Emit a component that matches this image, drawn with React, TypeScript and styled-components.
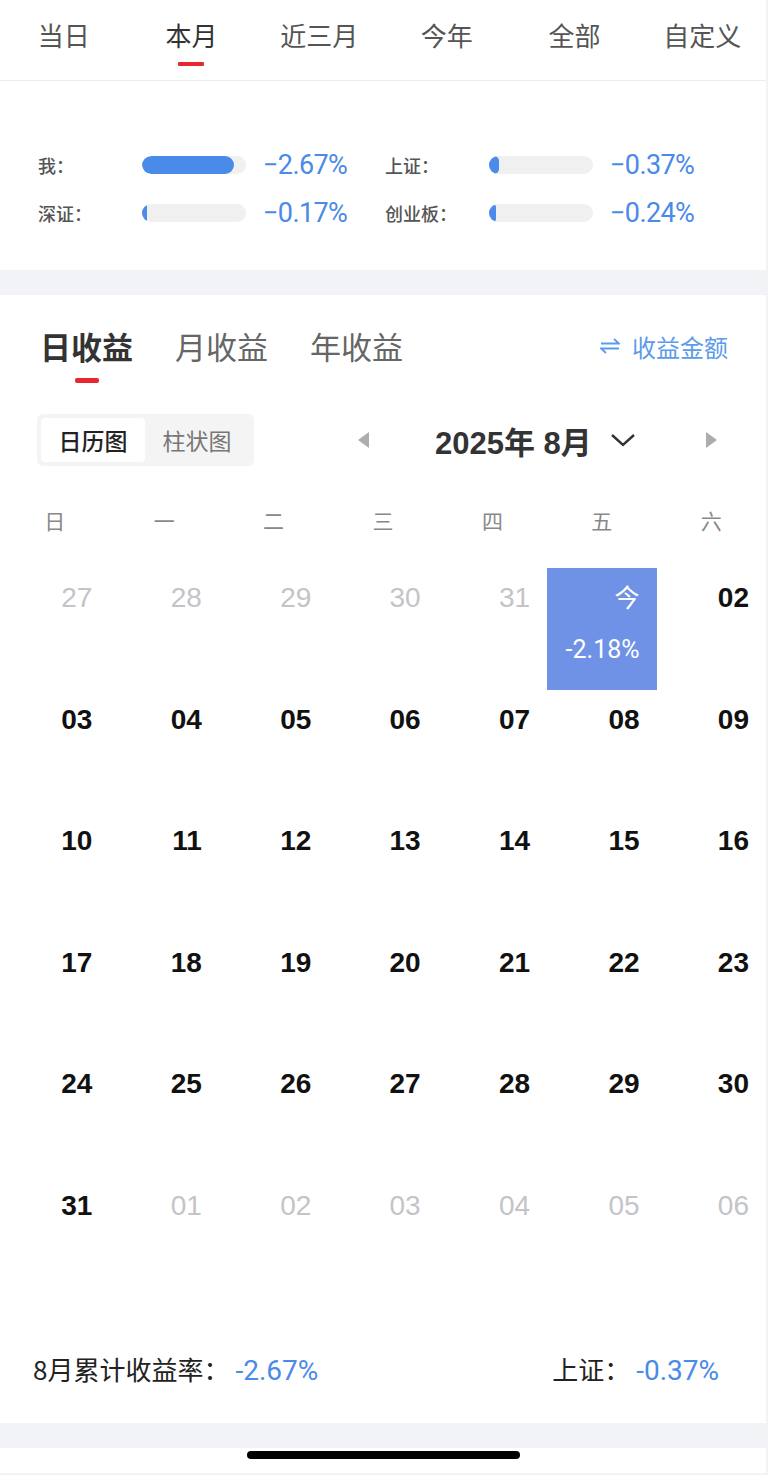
import React, { useState } from 'react';
import styled, { createGlobalStyle } from 'styled-components';

const GlobalStyle = createGlobalStyle`
  body {
    margin: 0;
    background: #ffffff;
    font-family: "Noto Sans CJK SC", "Noto Sans", sans-serif;
  }
`;

const BLUE = '#4a8ae8';

const periods = ['当日', '本月', '近三月', '今年', '全部', '自定义'];

const stats = [
  { label: '我：', fill: 92, value: '−2.67%' },
  { label: '上证：', fill: 10, value: '−0.37%' },
  { label: '深证：', fill: 5, value: '−0.17%' },
  { label: '创业板：', fill: 7, value: '−0.24%' },
];

const weekdays = ['日', '一', '二', '三', '四', '五', '六'];

type Day = { n: string; muted?: boolean; today?: boolean; rate?: string };

const buildDays = (): Day[] => {
  const days: Day[] = [];
  ['27', '28', '29', '30', '31'].forEach((n) => days.push({ n, muted: true }));
  days.push({ n: '今', today: true, rate: '-2.18%' });
  for (let i = 2; i <= 31; i++) days.push({ n: String(i).padStart(2, '0') });
  ['01', '02', '03', '04', '05', '06'].forEach((n) => days.push({ n, muted: true }));
  return days;
};

export default function App() {
  const [period, setPeriod] = useState(1);
  const [kind, setKind] = useState(0);
  const [view, setView] = useState(0);
  const days = buildDays();

  return (
    <Page>
      <GlobalStyle />
      <PeriodBar>
        {periods.map((p, i) => (
          <PeriodTab key={p} active={i === period} onClick={() => setPeriod(i)}>
            {p}
          </PeriodTab>
        ))}
      </PeriodBar>

      <StatsPanel>
        {stats.map((s) => (
          <StatItem key={s.label}>
            <StatLabel>{s.label}</StatLabel>
            <Track>
              <Fill style={{ width: `${s.fill}px` }} />
            </Track>
            <StatValue>{s.value}</StatValue>
          </StatItem>
        ))}
      </StatsPanel>

      <Gap />

      <ProfitHeader>
        <KindTabs>
          {['日收益', '月收益', '年收益'].map((k, i) => (
            <KindTab key={k} active={i === kind} onClick={() => setKind(i)}>
              {k}
            </KindTab>
          ))}
        </KindTabs>
        <SwitchLink>
          <svg width="20" height="16" viewBox="0 0 20 16">
            <path
              d="M1 5.5 H19 L14 1 M19 10.5 H1 L6 15"
              fill="none"
              stroke="#5b9bec"
              strokeWidth="1.8"
            />
          </svg>
          收益金额
        </SwitchLink>
      </ProfitHeader>

      <ToolRow>
        <Segment>
          {['日历图', '柱状图'].map((v, i) => (
            <SegmentItem key={v} active={i === view} onClick={() => setView(i)}>
              {v}
            </SegmentItem>
          ))}
        </Segment>
        <MonthNav>
          <Arrow viewBox="0 0 11 16">
            <path d="M11 0 L11 16 L0 8 Z" fill="#acacac" />
          </Arrow>
          <MonthTitle>
            2025年 8月
            <svg width="26" height="16" viewBox="0 0 26 16">
              <path d="M2 3 L13 13 L24 3" fill="none" stroke="#333" strokeWidth="2.4" />
            </svg>
          </MonthTitle>
          <Arrow viewBox="0 0 11 16">
            <path d="M0 0 L0 16 L11 8 Z" fill="#acacac" />
          </Arrow>
        </MonthNav>
      </ToolRow>

      <WeekRow>
        {weekdays.map((w) => (
          <WeekCell key={w}>{w}</WeekCell>
        ))}
      </WeekRow>

      <DayGrid>
        {days.map((d, i) => (
          <DayCell key={i} today={d.today}>
            <DayNum muted={d.muted} today={d.today}>{d.n}</DayNum>
            {d.rate && <DayRate>{d.rate}</DayRate>}
          </DayCell>
        ))}
      </DayGrid>

      <Summary>
        <SummaryPart>
          8月累计收益率：<SummaryValue>-2.67%</SummaryValue>
        </SummaryPart>
        <SummaryPart>
          上证：<SummaryValue>-0.37%</SummaryValue>
        </SummaryPart>
      </Summary>

      <Gap />

      <HomeArea>
        <HomeBar />
      </HomeArea>
    </Page>
  );
}

const Page = styled.div`
  width: 768px;
  height: 1475px;
  overflow: hidden;
  background: #fff;
  box-sizing: border-box;
  border-right: 2px solid #f3f3f3;
`;

const PeriodBar = styled.div`
  display: grid;
  grid-template-columns: repeat(6, 1fr);
  height: 81px;
  border-bottom: 1px solid #ececec;
  box-sizing: border-box;
`;

const PeriodTab = styled.div<{ active: boolean }>`
  position: relative;
  text-align: center;
  padding-top: 16px;
  font-size: 26px;
  line-height: 38px;
  color: ${({ active }) => (active ? '#333' : '#555')};

  &::after {
    content: '';
    display: ${({ active }) => (active ? 'block' : 'none')};
    position: absolute;
    left: 50%;
    top: 62px;
    width: 26px;
    height: 4px;
    margin-left: -13px;
    background: #e8262d;
    border-radius: 1px;
  }
`;

const StatsPanel = styled.div`
  display: grid;
  grid-template-columns: 347px 347px;
  grid-auto-rows: 48px;
  padding: 60px 0 33px 38px;
  height: 189px;
  box-sizing: border-box;
`;

const StatItem = styled.div`
  display: flex;
  align-items: center;
`;

const StatLabel = styled.div`
  width: 104px;
  font-size: 18px;
  font-weight: 500;
  color: #555;
`;

const Track = styled.div`
  width: 104px;
  height: 18px;
  border-radius: 9px;
  background: #f0f0f0;
  overflow: hidden;
`;

const Fill = styled.div`
  height: 100%;
  border-radius: 9px;
  background: ${BLUE};
  min-width: 5px;
`;

const StatValue = styled.div`
  margin-left: 17px;
  font-family: "Roboto", "Noto Sans", sans-serif;
  font-size: 27px;
  color: ${BLUE};
  letter-spacing: -0.6px;
`;

const Gap = styled.div`
  height: 25px;
  background: #f2f3f6;
`;

const ProfitHeader = styled.div`
  display: flex;
  align-items: center;
  justify-content: space-between;
  padding: 12px 38px 0 40px;
  height: 90px;
  box-sizing: border-box;
`;

const KindTabs = styled.div`
  display: flex;
  gap: 42px;
`;

const KindTab = styled.div<{ active: boolean }>`
  position: relative;
  font-size: 31px;
  line-height: 50px;
  font-weight: ${({ active }) => (active ? 700 : 400)};
  color: ${({ active }) => (active ? '#333' : '#666')};

  &::after {
    content: '';
    display: ${({ active }) => (active ? 'block' : 'none')};
    position: absolute;
    left: 50%;
    top: 57px;
    width: 24px;
    height: 5px;
    margin-left: -12px;
    border-radius: 2px;
    background: #e8262d;
  }
`;

const SwitchLink = styled.div`
  display: flex;
  align-items: center;
  gap: 12px;
  font-size: 24px;
  color: #5b9bec;
`;

const ToolRow = styled.div`
  display: flex;
  align-items: center;
  padding: 29px 0 0 37px;
  height: 81px;
  box-sizing: border-box;
`;

const Segment = styled.div`
  display: flex;
  width: 217px;
  height: 52px;
  padding: 4px;
  box-sizing: border-box;
  border-radius: 6px;
  background: #f4f4f4;
`;

const SegmentItem = styled.div<{ active: boolean }>`
  flex: 0 0 104px;
  display: flex;
  align-items: center;
  justify-content: center;
  border-radius: 4px;
  font-size: 23px;
  background: ${({ active }) => (active ? '#fff' : 'transparent')};
  color: ${({ active }) => (active ? '#222' : '#777')};
  font-weight: ${({ active }) => (active ? 500 : 400)};
`;

const MonthNav = styled.div`
  display: flex;
  align-items: center;
  margin-left: 104px;
`;

const Arrow = styled.svg`
  width: 11px;
  height: 16px;
`;

const MonthTitle = styled.div`
  display: flex;
  align-items: center;
  gap: 18px;
  margin: 0 70px 0 66px;
  font-family: "Liberation Sans", "Noto Sans CJK SC", sans-serif;
  font-size: 31px;
  font-weight: 700;
  color: #333;
`;

const WeekRow = styled.div`
  display: grid;
  grid-template-columns: repeat(7, 1fr);
  padding-top: 39px;
  height: 102px;
  box-sizing: border-box;
`;

const WeekCell = styled.div`
  text-align: center;
  font-size: 21px;
  line-height: 30px;
  color: #888;
`;

const DayGrid = styled.div`
  display: grid;
  grid-template-columns: repeat(7, 1fr);
  grid-auto-rows: 121.6px;
`;

const DayCell = styled.div<{ today?: boolean }>`
  display: flex;
  flex-direction: column;
  align-items: flex-end;
  padding: 13px 17px 0 0;
  background: ${({ today }) => (today ? '#6f92e6' : 'transparent')};
`;

const DayNum = styled.div<{ muted?: boolean; today?: boolean }>`
  font-family: "Liberation Sans", "Noto Sans CJK SC", sans-serif;
  font-size: ${({ today }) => (today ? '25px' : '28px')};
  line-height: 34px;
  font-weight: ${({ muted, today }) => (muted || today ? 400 : 700)};
  color: ${({ muted, today }) => (today ? '#fff' : muted ? '#c4c4c8' : '#111')};
`;

const DayRate = styled.div`
  margin-top: 20px;
  font-family: "Roboto", "Noto Sans", sans-serif;
  font-size: 25px;
  line-height: 30px;
  color: #fff;
`;

const Summary = styled.div`
  display: flex;
  align-items: center;
  justify-content: space-between;
  padding: 16px 47px 0 33px;
  height: 125px;
  box-sizing: border-box;
`;

const SummaryPart = styled.div`
  font-size: 26px;
  color: #222;
`;

const SummaryValue = styled.span`
  margin-left: 6px;
  font-family: "Roboto", "Noto Sans", sans-serif;
  font-size: 28px;
  color: ${BLUE};
`;

const HomeArea = styled.div`
  display: flex;
  justify-content: center;
  padding-top: 3px;
  height: 27px;
  box-sizing: border-box;
  border-bottom: 2px solid #f3f3f3;
`;

const HomeBar = styled.div`
  width: 273px;
  height: 8px;
  border-radius: 4px;
  background: #000;
`;
